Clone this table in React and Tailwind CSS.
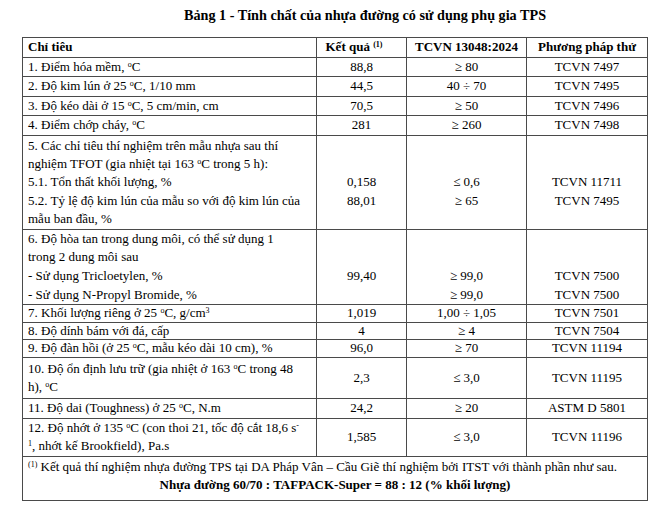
const rows = [
  { label: <>1. Điểm hóa mềm, <sup className="text-[8px]">o</sup>C</>, kq: '88,8', tc: '≥ 80', pp: 'TCVN 7497' },
  { label: <>2. Độ kim lún ở 25 <sup className="text-[8px]">o</sup>C, 1/10 mm</>, kq: '44,5', tc: '40 ÷ 70', pp: 'TCVN 7495' },
  { label: <>3. Độ kéo dài ở 15 <sup className="text-[8px]">o</sup>C, 5 cm/min, cm</>, kq: '70,5', tc: '≥ 50', pp: 'TCVN 7496' },
  { label: <>4. Điểm chớp cháy, <sup className="text-[8px]">o</sup>C</>, kq: '281', tc: '≥ 260', pp: 'TCVN 7498' },
];

const rowsB = [
  { label: <>7. Khối lượng riêng ở 25 <sup className="text-[8px]">o</sup>C, g/cm<sup className="text-[8px]">3</sup></>, kq: '1,019', tc: '1,00 ÷ 1,05', pp: 'TCVN 7501' },
  { label: '8. Độ dính bám với đá, cấp', kq: '4', tc: '≥ 4', pp: 'TCVN 7504' },
  { label: <>9. Độ đàn hồi (ở 25 <sup className="text-[8px]">o</sup>C, mẫu kéo dài 10 cm), %</>, kq: '96,0', tc: '≥ 70', pp: 'TCVN 11194' },
];

const td = 'border border-[#4a4a4a] px-[5px] py-0 align-middle';

export default function App() {
  return (
    <div className="w-[670px] h-[519px] bg-white text-black text-[13px] leading-[18.5px]" style={{ fontFamily: '"Liberation Serif", "Times New Roman", serif' }}>
      <div className="pt-[6px] pl-[60px] text-center font-bold text-[14.2px] leading-[18px]">
        Bảng 1 - Tính chất của nhựa đường có sử dụng phụ gia TPS
      </div>
      <div className="pt-[13px] pl-[22px]">
        <table className="table-fixed border-collapse w-[625px]">
          <colgroup>
            <col className="w-[294px]" />
            <col className="w-[90px]" />
            <col className="w-[120px]" />
            <col className="w-[121px]" />
          </colgroup>
          <tbody>
            <tr className="h-[19.5px] font-bold">
              <td className={td}>Chỉ tiêu</td>
              <td className={`${td} text-center pr-[20px]`}>Kết quả <sup className="text-[8px]">(1)</sup></td>
              <td className={`${td} text-center`}>TCVN 13048:2024</td>
              <td className={`${td} text-center`}>Phương pháp thử</td>
            </tr>
            {rows.map((r, i) => (
              <tr key={i} className="h-[19.5px]">
                <td className={td}>{r.label}</td>
                <td className={`${td} text-center`}>{r.kq}</td>
                <td className={`${td} text-center`}>{r.tc}</td>
                <td className={`${td} text-center`}>{r.pp}</td>
              </tr>
            ))}
            <tr>
              <td className={`${td} leading-[18.4px] pt-[1px]`}>
                5. Các chỉ tiêu thí nghiệm trên mẫu nhựa sau thí<br />
                nghiệm TFOT (gia nhiệt tại 163 <sup className="text-[8px]">o</sup>C trong 5 h):<br />
                5.1. Tổn thất khối lượng, %<br />
                5.2. Tỷ lệ độ kim lún của mẫu so với độ kim lún của<br />
                mẫu ban đầu, %
              </td>
              <td className={`${td} text-center leading-[18.4px] align-top pt-[1px]`}>
                <br /><br />0,158<br />88,01
              </td>
              <td className={`${td} text-center leading-[18.4px] align-top pt-[1px]`}>
                <br /><br />≤ 0,6<br />≥ 65
              </td>
              <td className={`${td} text-center leading-[18.4px] align-top pt-[1px]`}>
                <br /><br />TCVN 11711<br />TCVN 7495
              </td>
            </tr>
            <tr>
              <td className={`${td} leading-[18.7px]`}>
                6. Độ hòa tan trong dung môi, có thể sử dụng 1<br />
                trong 2 dung môi sau<br />
                - Sử dụng Tricloetylen, %<br />
                - Sử dụng N-Propyl Bromide, %
              </td>
              <td className={`${td} text-center leading-[18.7px] align-top`}>
                <br /><br />99,40
              </td>
              <td className={`${td} text-center leading-[18.7px] align-top`}>
                <br /><br />≥ 99,0<br />≥ 99,0
              </td>
              <td className={`${td} text-center leading-[18.7px] align-top`}>
                <br /><br />TCVN 7500<br />TCVN 7500
              </td>
            </tr>
            {rowsB.map((r, i) => (
              <tr key={i} className="h-[17px] leading-[16.5px]">
                <td className={td}>{r.label}</td>
                <td className={`${td} text-center`}>{r.kq}</td>
                <td className={`${td} text-center`}>{r.tc}</td>
                <td className={`${td} text-center`}>{r.pp}</td>
              </tr>
            ))}
            <tr className="h-[41px]">
              <td className={`${td} leading-[18px]`}>
                10. Độ ổn định lưu trữ (gia nhiệt ở 163 <sup className="text-[8px]">o</sup>C trong 48<br />
                h), <sup className="text-[8px]">o</sup>C
              </td>
              <td className={`${td} text-center`}>2,3</td>
              <td className={`${td} text-center`}>≤ 3,0</td>
              <td className={`${td} text-center`}>TCVN 11195</td>
            </tr>
            <tr className="h-[20px]">
              <td className={td}>
                11. Độ dai (Toughness) ở 25 <sup className="text-[8px]">o</sup>C, N.m
              </td>
              <td className={`${td} text-center`}>24,2</td>
              <td className={`${td} text-center`}>≥ 20</td>
              <td className={`${td} text-center`}>ASTM D 5801</td>
            </tr>
            <tr className="h-[38px]">
              <td className={`${td} leading-[18px]`}>
                12. Độ nhớt ở 135 <sup className="text-[8px]">o</sup>C (con thoi 21, tốc độ cắt 18,6 s<sup className="text-[8px]">-</sup><br />
                <sup className="text-[8px]">1</sup>, nhớt kế Brookfield), Pa.s
              </td>
              <td className={`${td} text-center`}>1,585</td>
              <td className={`${td} text-center`}>≤ 3,0</td>
              <td className={`${td} text-center`}>TCVN 11196</td>
            </tr>
            <tr className="h-[44px]">
              <td colSpan={4} className={`${td} align-top pt-[1px] pb-[6px] leading-[18px]`}>
                <div>
                  <sup className="text-[8px]">(1)</sup> Kết quả thí nghiệm nhựa đường TPS tại DA Pháp Vân – Cầu Giẽ thí nghiệm bởi ITST với thành phần như sau.
                </div>
                <div className="text-center font-bold">
                  Nhựa đường 60/70 : TAFPACK-Super = 88 : 12 (% khối lượng)
                </div>
              </td>
            </tr>
          </tbody>
        </table>
      </div>
    </div>
  );
}
